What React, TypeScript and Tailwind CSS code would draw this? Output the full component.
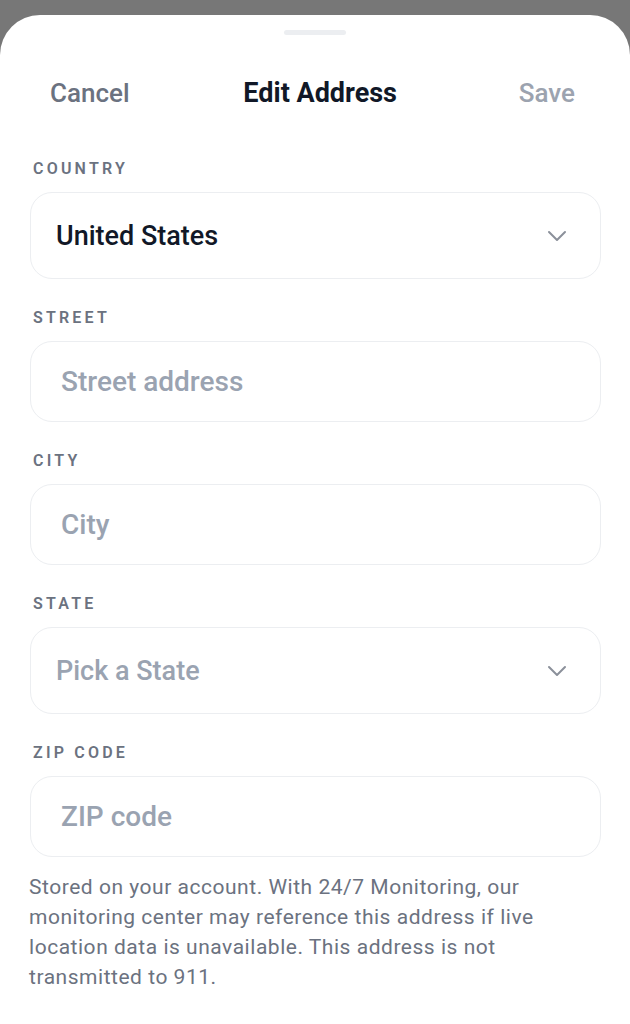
import React from "react";

const Chevron = () => (
  <svg width="20" height="12" viewBox="0 0 20 12" fill="none" className="shrink-0">
    <path d="M2 2l8 8 8-8" stroke="#8b909a" strokeWidth="2" strokeLinecap="round" strokeLinejoin="round" />
  </svg>
);

const Label = ({ children }: { children: React.ReactNode }) => (
  <div className="pl-[3px] text-[16px] leading-[20px] font-semibold tracking-[0.2em] text-[#6b7280]">{children}</div>
);

export default function App() {
  return (
    <div className="h-[1024px] bg-[#777777] pt-[15px] overflow-hidden" style={{ fontFamily: "Roboto, 'Noto Sans', sans-serif" }}>
      <div className="h-full bg-white rounded-t-[40px] flex flex-col">
        <div className="mt-[15px] mx-auto w-[62px] h-[5px] rounded-full bg-[#eceef1]" />
        <div className="mt-[42px] flex items-center justify-between pl-[50px] pr-[55px] h-[32px]">
          <span className="text-[26px] font-medium text-[#6b7280]">Cancel</span>
          <span className="text-[27px] font-bold text-[#111827] -ml-[8px]">Edit Address</span>
          <span className="text-[26px] font-medium text-[#9ca3af]">Save</span>
        </div>
        <div className="mt-[50px] px-[30px] pr-[29px] flex flex-col">
          <Label>COUNTRY</Label>
          <div className="mt-[13px] h-[87px] rounded-[22px] border border-[#eceef1] flex items-center justify-between pl-[25px] pr-[33px]">
            <span className="text-[27px] font-medium text-[#111827] translate-y-[1px]">United States</span>
            <Chevron />
          </div>
          <div className="mt-[29px]"><Label>STREET</Label></div>
          <div className="mt-[13px] h-[81px] rounded-[22px] border border-[#eceef1] flex items-center pl-[30px]">
            <span className="text-[28px] font-medium text-[#9aa3b1]">Street address</span>
          </div>
          <div className="mt-[29px]"><Label>CITY</Label></div>
          <div className="mt-[13px] h-[81px] rounded-[22px] border border-[#eceef1] flex items-center pl-[30px]">
            <span className="text-[28px] font-medium text-[#9aa3b1]">City</span>
          </div>
          <div className="mt-[29px]"><Label>STATE</Label></div>
          <div className="mt-[13px] h-[87px] rounded-[22px] border border-[#eceef1] flex items-center justify-between pl-[25px] pr-[33px]">
            <span className="text-[27px] font-medium text-[#9aa3b1] translate-y-[1px]">Pick a State</span>
            <Chevron />
          </div>
          <div className="mt-[29px]"><Label>ZIP CODE</Label></div>
          <div className="mt-[13px] h-[81px] rounded-[22px] border border-[#eceef1] flex items-center pl-[30px]">
            <span className="text-[28px] font-medium text-[#9aa3b1]">ZIP code</span>
          </div>
          <p className="mt-[15px] -ml-[1px] text-[21px] leading-[30px] tracking-[0.025em] text-[#6b7280]">
            Stored on your account. With 24/7 Monitoring, our monitoring center may reference this address if live location data is unavailable. This address is not transmitted to 911.
          </p>
        </div>
      </div>
    </div>
  );
}
